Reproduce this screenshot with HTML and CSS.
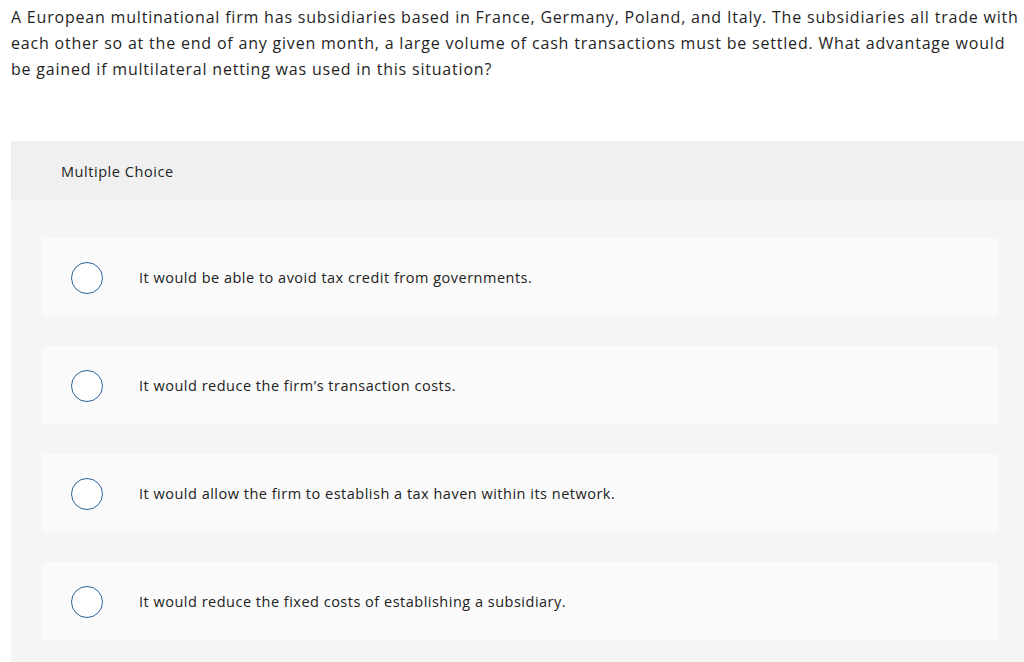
FILE: index.html
```html
<!DOCTYPE html>
<html>
<head>
<meta charset="utf-8">
<link rel="stylesheet" href="styles.css">
</head>
<body>
<p class="question">A European multinational firm has subsidiaries based in France, Germany, Poland, and Italy. The subsidiaries all trade with each other so at the end of any given month, a large volume of cash transactions must be settled. What advantage would be gained if multilateral netting was used in this situation?</p>
<section class="panel">
  <div class="panel-head">Multiple Choice</div>
  <div class="panel-body">
    <label class="choice"><span class="radio"></span><span class="choice-text">It would be able to avoid tax credit from governments.</span></label>
    <label class="choice"><span class="radio"></span><span class="choice-text">It would reduce the firm’s transaction costs.</span></label>
    <label class="choice"><span class="radio"></span><span class="choice-text">It would allow the firm to establish a tax haven within its network.</span></label>
    <label class="choice"><span class="radio"></span><span class="choice-text">It would reduce the fixed costs of establishing a subsidiary.</span></label>
  </div>
</section>
</body>
</html>
```
FILE: styles.css
```css
html, body {
  margin: 0;
  padding: 0;
  background: #fff;
  overflow: hidden;
}
body {
  font-family: "Open Sans", "Liberation Sans", sans-serif;
  color: #1f1f1f;
}
.question {
  margin: 4px 0 0 11px;
  width: 1009px;
  font-size: 16px;
  letter-spacing: 0.8px;
  line-height: 26px;
}
.panel {
  margin: 59px 0 0 11px;
  width: 1013px;
  background: #f5f5f5;
}
.panel-head {
  height: 60px;
  display: flex;
  align-items: center;
  padding-left: 50px;
  background: #f0f0f0;
  font-size: 14.5px;
  letter-spacing: 0.55px;
  color: #222;
}
.panel-body {
  display: flex;
  flex-direction: column;
  gap: 29px;
  padding: 37px 26px 30px 30px;
}
.choice {
  display: flex;
  align-items: center;
  height: 79px;
  background: #fafafa;
  border-radius: 4px;
  padding-left: 30px;
}
.radio {
  width: 30px;
  height: 30px;
  border: 1.5px solid #2d6496;
  border-radius: 50%;
  background: #fff;
  flex: none;
}
.choice-text {
  margin-left: 36px;
  font-size: 14.5px;
  letter-spacing: 0.5px;
  color: #222;
}
```
